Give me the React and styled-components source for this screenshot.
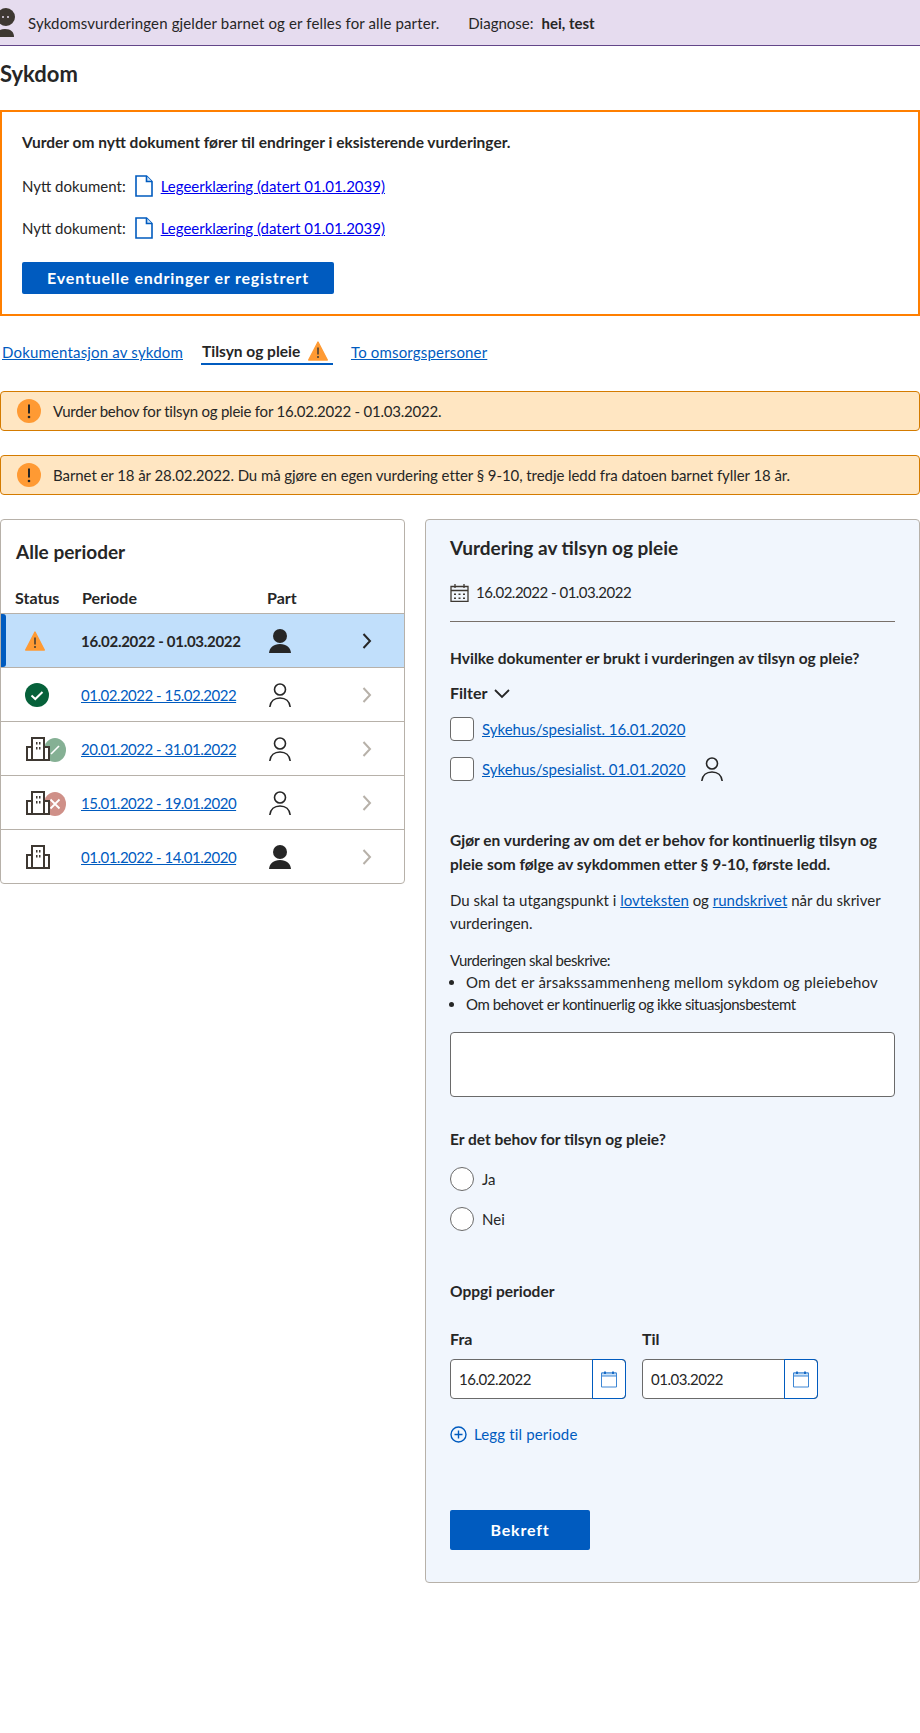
import React from "react";
import styled, { createGlobalStyle } from "styled-components";

const GlobalStyle = createGlobalStyle`
  * { box-sizing: border-box; }
  html, body { margin: 0; padding: 0; background: #fff; }
  body {
    font-family: "Lato", "Noto Sans", sans-serif;
    font-size: 15px;
    line-height: 22px;
    color: #262626;
    overflow-x: hidden;
  }
`;

const Page = styled.div`
  width: 920px;
  min-height: 1733px;
  overflow: hidden;
`;

const Tracked = styled.span`
  letter-spacing: ${(p) => p.$track}px;
`;

const TopBar = styled.div`
  height: 46px;
  background: #e6dcef;
  border-bottom: 1px solid #634689;
  display: flex;
  align-items: center;
  padding-left: 28px;
  position: relative;
`;

const TopIcon = styled.svg`
  position: absolute;
  left: 0;
  top: 8px;
`;

const Diagnose = styled.span`
  margin-left: 29px;
`;

const DiagnoseValue = styled.b`
  margin-left: 8px;
  font-weight: 700;
`;

const Title = styled.h1`
  margin: 15px 0 23px;
  font-size: 22px;
  line-height: 26px;
  font-weight: 700;
`;

const NoticeBox = styled.section`
  border: 2px solid #ff7f00;
  height: 206px;
  padding: 19px 20px 0;
`;

const NoticeTitle = styled.p`
  margin: 0 0 22px;
  font-size: 15.5px;
  font-weight: 700;
`;

const DocRow = styled.div`
  display: flex;
  align-items: center;
  height: 22px;
  margin-bottom: 20px;
`;

const DocLink = styled.a`
  color: #0000ee;
  text-decoration: underline;
  margin-left: 8px;
`;

const DocIcon = styled.svg`
  margin-left: 9px;
`;

const PrimaryButton = styled.button`
  display: block;
  border: 0;
  border-radius: 2px;
  background: #005bbf;
  color: #fff;
  font: 700 16px/22px "Lato", "Noto Sans", sans-serif;
  letter-spacing: 0.8px;
  width: ${(p) => p.$width}px;
  height: ${(p) => p.$height}px;
  margin-top: ${(p) => p.$top || 0}px;
  padding: 0;
`;

const Tabs = styled.nav`
  display: flex;
  align-items: flex-start;
  margin: 25px 0 26px 2px;
  height: 24px;
`;

const TabLink = styled.a`
  color: #005bbf;
  text-decoration: underline;
  line-height: 22px;
  letter-spacing: 0.17px;
  margin-right: ${(p) => p.$gap || 0}px;
`;

const ActiveTab = styled.div`
  display: flex;
  align-items: center;
  justify-content: space-between;
  width: 132px;
  font-size: 15.5px;
  font-weight: 700;
  height: 24px;
  border-bottom: 2px solid #005bbf;
  padding: 0 5px 2px 1px;
  margin-right: 18px;
`;

const Alert = styled.div`
  height: 40px;
  display: flex;
  align-items: center;
  gap: 12px;
  padding-left: 16px;
  margin-bottom: 24px;
  background: #ffe6c2;
  border: 1px solid #d47b00;
  border-radius: 4px;
`;

const Columns = styled.div`
  display: flex;
  align-items: flex-start;
  gap: 20px;
`;

const Card = styled.section`
  border: 1px solid #b7b1a9;
  border-radius: 4px;
`;

const PeriodCard = styled(Card)`
  width: 405px;
  flex: none;
  background: #fff;
`;

const PeriodHeading = styled.h2`
  margin: 19px 15px 21px;
  font-size: 19px;
  line-height: 26px;
  font-weight: 700;
`;

const PeriodGrid = styled.div`
  display: grid;
  grid-template-columns: 80px 186px 88px 1fr;
  align-items: center;
`;

const HeadRow = styled(PeriodGrid)`
  height: 27px;
  font-size: 16px;
  font-weight: 700;
  padding-bottom: 4px;
  & > span:first-child { padding-left: 14px; }
  & > span:nth-child(2) { padding-left: 1px; }
`;

const PeriodRow = styled(PeriodGrid)`
  height: 54px;
  border-top: 1px solid #b7b1a9;
  background: ${(p) => (p.$active ? "#c1dffb" : "transparent")};
  position: relative;
  ${(p) =>
    p.$active &&
    `&::before {
      content: "";
      position: absolute;
      left: 0;
      top: 0;
      bottom: 0;
      width: 5px;
      border-radius: 0 3px 3px 0;
      background: #005bbf;
    }`}
`;

const StatusCell = styled.div`
  padding-left: ${(p) => p.$left}px;
  display: flex;
  align-items: center;
  position: relative;
`;

const StatusBadge = styled.span`
  position: absolute;
  left: 43px;
  top: 1px;
  width: 22px;
  height: 24px;
  border-radius: 50%;
  background: ${(p) => p.$bg};
  display: flex;
  align-items: center;
  justify-content: center;
`;

const BuildingWrap = styled.svg`
  position: relative;
  z-index: 1;
  display: block;
`;

const PeriodLink = styled.a`
  color: #005bbf;
  text-decoration: underline;
  letter-spacing: -0.5px;
`;

const PeriodStrong = styled.span`
  font-weight: 700;
  letter-spacing: -0.29px;
`;

const PartCell = styled.div`
  padding-left: 2px;
  display: flex;
`;

const ChevronCell = styled.div`
  display: flex;
`;

const AssessCard = styled(Card)`
  width: 495px;
  flex: none;
  height: 1064px;
  background: #f1f6fd;
  padding: 14px 24px 0;
`;

const AssessHeading = styled.h2`
  margin: 0 0 19px;
  font-size: 19px;
  line-height: 28px;
  font-weight: 700;
`;

const DateRow = styled.div`
  display: flex;
  align-items: center;
  gap: 7px;
  height: 22px;
  letter-spacing: -0.5px;
`;

const Divider = styled.hr`
  border: 0;
  border-top: 1px solid #78706a;
  margin: 18px 0 25px;
`;

const Question = styled.p`
  margin: 0 0 13px;
  font-size: 15.5px;
  font-weight: 700;
`;

const FilterRow = styled.div`
  display: flex;
  align-items: center;
  gap: 6px;
  font-size: 16px;
  font-weight: 700;
  height: 22px;
  margin-bottom: 13px;
`;

const CheckRow = styled.label`
  display: flex;
  align-items: center;
  height: 24px;
  margin-bottom: 16px;
`;

const CheckBox = styled.span`
  width: 24px;
  height: 24px;
  background: #fff;
  border: 1px solid #6a6a6a;
  border-radius: 4px;
  margin-right: 8px;
  flex: none;
`;

const CheckPerson = styled.span`
  display: flex;
  margin-left: 16px;
`;

const Lead = styled.p`
  margin: 47px 0 13px;
  font-size: 15.5px;
  font-weight: 700;
  line-height: 24px;
`;

const Body = styled.p`
  margin: 0 0 14px;
  line-height: 23px;
`;

const InlineLink = styled.a`
  color: #005bbf;
  text-decoration: underline;
`;

const BulletIntro = styled.div`
  line-height: 22px;
  letter-spacing: -0.46px;
`;

const BulletList = styled.ul`
  margin: 0 0 17px;
  padding-left: 16px;
  line-height: 22px;
`;

const TextArea = styled.div`
  height: 65px;
  background: #fff;
  border: 1px solid #6a6a6a;
  border-radius: 4px;
  margin-bottom: 31px;
`;

const RadioRow = styled.label`
  display: flex;
  align-items: center;
  gap: 8px;
  height: 24px;
  margin-bottom: 16px;
`;

const RadioDot = styled.span`
  width: 24px;
  height: 24px;
  border-radius: 50%;
  background: #fff;
  border: 1px solid #6a6a6a;
`;

const FieldHeading = styled.p`
  margin: ${(p) => p.$top}px 0 ${(p) => p.$bottom}px;
  font-size: 15.5px;
  font-weight: 700;
`;

const DateFields = styled.div`
  display: flex;
  gap: 16px;
`;

const DateField = styled.div`
  width: 176px;
`;

const FieldLabel = styled.div`
  font-size: 16px;
  font-weight: 700;
  margin-bottom: 9px;
`;

const DateInput = styled.div`
  height: 40px;
  display: flex;
  background: #fff;
  border: 1px solid #6a6a6a;
  border-radius: 4px;
`;

const DateValue = styled.span`
  flex: 1;
  display: flex;
  align-items: center;
  padding-left: 8px;
  letter-spacing: -0.48px;
`;

const DateButton = styled.span`
  width: 34px;
  margin: -1px;
  border: 1px solid #005bbf;
  border-radius: 0 4px 4px 0;
  display: flex;
  align-items: center;
  justify-content: center;
`;

const AddRow = styled.div`
  display: flex;
  align-items: center;
  gap: 7px;
  color: #005bbf;
  letter-spacing: 0.15px;
  margin: 24px 0 65px;
  height: 22px;
`;

const PersonOutline = () => (
  <svg width="22" height="24" viewBox="0 0 22 24" fill="none" stroke="#262626" strokeWidth="1.6">
    <circle cx="11" cy="6.5" r="5.5" />
    <path d="M0.8 24c.6-5.6 4.6-9 10.2-9s9.6 3.4 10.2 9" />
  </svg>
);

const PersonSolid = () => (
  <svg width="22" height="24" viewBox="0 0 22 24" fill="#262626">
    <circle cx="11" cy="7" r="7" />
    <path d="M0 24c.5-5.5 4.5-9 11-9s10.5 3.5 11 9z" />
  </svg>
);

const Chevron = ({ color = "#262626" }) => (
  <svg width="24" height="24" viewBox="0 0 24 24" fill="none" stroke={color} strokeWidth="2">
    <path d="M8.5 5 15 12l-6.5 7" />
  </svg>
);

const Triangle = ({ size = 20 }) => (
  <svg width={size} height={size} viewBox="0 0 20 20">
    <path d="M10 1 19.3 19H.7z" fill="#ff9a33" stroke="#ff9a33" strokeWidth="1.4" strokeLinejoin="round" />
    <path d="M10 6.5v7" stroke="#3e3832" strokeWidth="1.5" />
    <circle cx="10" cy="16" r="1" fill="#3e3832" />
  </svg>
);

const AlertDot = () => (
  <svg width="24" height="24" viewBox="0 0 24 24">
    <circle cx="12" cy="12" r="12" fill="#ff9a33" />
    <path d="M12 5.5v9" stroke="#262626" strokeWidth="2" />
    <circle cx="12" cy="18" r="1.3" fill="#262626" />
  </svg>
);

const Building = () => (
  <BuildingWrap width="24" height="24" viewBox="0 0 24 24" fill="#fff" stroke="#3e3832" strokeWidth="2">
    <path d="M1 23V10h5v13zM18 23V10h5v13z" />
    <path d="M6 23V1h12v22z" />
    <path d="M10 5h1.5v2.5H10zM13 5h1.5v2.5H13zM10 10h1.5v2.5H10zM13 10h1.5v2.5H13z" fill="#3e3832" stroke="none" />
    <path d="M1 23h22" />
  </BuildingWrap>
);

const CalendarLine = () => (
  <svg width="18" height="18" viewBox="0 0 18 18" fill="#cde3f8" stroke="#005bbf" strokeWidth="1">
    <path d="M1.5 3h15v14h-15z" fill="none" stroke="#3d86d4" />
    <path d="M1.5 3h15v3h-15z" stroke="#3d86d4" />
    <path d="M5 1.5V4M13 1.5V4" strokeWidth="1.6" />
  </svg>
);

const DocGlyph = () => (
  <DocIcon width="18" height="22" viewBox="0 0 18 22" fill="none" stroke="#005bbf" strokeWidth="1.6">
    <path d="M1 1h10.5L17 6.5V21H1z" />
    <path d="M11.5 1v5.5H17" fill="#cde3f8" />
  </DocIcon>
);

const rows = [
  { period: "01.02.2022 - 15.02.2022", status: "ok", part: "outline" },
  { period: "20.01.2022 - 31.01.2022", status: "buildingOk", part: "outline" },
  { period: "15.01.2022 - 19.01.2020", status: "buildingNo", part: "outline" },
  { period: "01.01.2022 - 14.01.2020", status: "building", part: "solid" },
];

const StatusIcon = ({ status }) => {
  if (status === "ok") {
    return (
      <svg width="24" height="24" viewBox="0 0 24 24">
        <circle cx="12" cy="12" r="12" fill="#06613a" />
        <path d="M6.5 12.5 10.3 16 17.5 9" stroke="#fff" strokeWidth="2" fill="none" />
      </svg>
    );
  }
  return (
    <>
      <Building />
      {status === "buildingOk" && (
        <StatusBadge $bg="#85b094">
          <svg width="14" height="14" viewBox="0 0 14 14" fill="none" stroke="#fff" strokeWidth="1.6">
            <path d="M3 11 11 3" />
          </svg>
        </StatusBadge>
      )}
      {status === "buildingNo" && (
        <StatusBadge $bg="#cf9088">
          <svg width="14" height="14" viewBox="0 0 14 14" fill="none" stroke="#fff" strokeWidth="1.8">
            <path d="M2.5 2.5l9 9M11.5 2.5l-9 9" />
          </svg>
        </StatusBadge>
      )}
    </>
  );
};

const App = () => (
  <Page>
    <GlobalStyle />
    <TopBar>
      <TopIcon width="16" height="30" viewBox="0 0 16 30">
        <circle cx="6" cy="9" r="9" fill="#3e3832" />
        <circle cx="3" cy="9" r="1" fill="#e6dcef" />
        <circle cx="8" cy="9" r="1" fill="#e6dcef" />
        <path d="M-4 29c0-5 3-8 9-8s9 3 9 8z" fill="#3e3832" />
      </TopIcon>
      <Tracked $track={0.13}>Sykdomsvurderingen gjelder barnet og er felles for alle parter.</Tracked>
      <Diagnose>Diagnose:</Diagnose>
      <DiagnoseValue>hei, test</DiagnoseValue>
    </TopBar>

    <Title>Sykdom</Title>

    <NoticeBox>
      <NoticeTitle>Vurder om nytt dokument fører til endringer i eksisterende vurderinger.</NoticeTitle>
      <DocRow>
        Nytt dokument:
        <DocGlyph />
        <DocLink>Legeerklæring (datert 01.01.2039)</DocLink>
      </DocRow>
      <DocRow>
        Nytt dokument:
        <DocGlyph />
        <DocLink>Legeerklæring (datert 01.01.2039)</DocLink>
      </DocRow>
      <PrimaryButton $width={312} $height={32} $top={23}>Eventuelle endringer er registrert</PrimaryButton>
    </NoticeBox>

    <Tabs>
      <TabLink $gap={18}>Dokumentasjon av sykdom</TabLink>
      <ActiveTab>
        Tilsyn og pleie
        <Triangle />
      </ActiveTab>
      <TabLink>To omsorgspersoner</TabLink>
    </Tabs>

    <Alert>
      <AlertDot />
      <Tracked $track={-0.22}>Vurder behov for tilsyn og pleie for 16.02.2022 - 01.03.2022.</Tracked>
    </Alert>
    <Alert>
      <AlertDot />
      <Tracked $track={-0.07}>Barnet er 18 år 28.02.2022. Du må gjøre en egen vurdering etter § 9-10, tredje ledd fra datoen barnet fyller 18 år.</Tracked>
    </Alert>

    <Columns>
      <PeriodCard>
        <PeriodHeading>Alle perioder</PeriodHeading>
        <HeadRow>
          <span>Status</span>
          <span>Periode</span>
          <span>Part</span>
        </HeadRow>
        <PeriodRow $active>
          <StatusCell $left={24}><Triangle /></StatusCell>
          <PeriodStrong>16.02.2022 - 01.03.2022</PeriodStrong>
          <PartCell><PersonSolid /></PartCell>
          <ChevronCell><Chevron /></ChevronCell>
        </PeriodRow>
        {rows.map((row) => (
          <PeriodRow key={row.period}>
            <StatusCell $left={row.status === "ok" ? 24 : 25}><StatusIcon status={row.status} /></StatusCell>
            <PeriodLink>{row.period}</PeriodLink>
            <PartCell>{row.part === "solid" ? <PersonSolid /> : <PersonOutline />}</PartCell>
            <ChevronCell><Chevron color="#b7b1a9" /></ChevronCell>
          </PeriodRow>
        ))}
      </PeriodCard>

      <AssessCard>
        <AssessHeading>Vurdering av tilsyn og pleie</AssessHeading>
        <DateRow>
          <svg width="19" height="19" viewBox="0 0 19 19" fill="none" stroke="#3e3832" strokeWidth="1.3">
            <path d="M1 3.5h17v15H1zM1 7.5h17M5 1v4M14 1v4" />
            <path d="M4 10.5h2v1.6H4zM8.5 10.5h2v1.6h-2zM13 10.5h2v1.6h-2zM4 14.5h2v1.6H4zM8.5 14.5h2v1.6h-2zM13 14.5h2v1.6h-2z" fill="#3e3832" stroke="none" />
          </svg>
          16.02.2022 - 01.03.2022
        </DateRow>
        <Divider />
        <Question>Hvilke dokumenter er brukt i vurderingen av tilsyn og pleie?</Question>
        <FilterRow>
          Filter
          <svg width="18" height="18" viewBox="0 0 18 18" fill="none" stroke="#262626" strokeWidth="1.8">
            <path d="M2 6l7 7 7-7" />
          </svg>
        </FilterRow>
        <CheckRow>
          <CheckBox />
          <InlineLink>Sykehus/spesialist. 16.01.2020</InlineLink>
        </CheckRow>
        <CheckRow>
          <CheckBox />
          <InlineLink>Sykehus/spesialist. 01.01.2020</InlineLink>
          <CheckPerson><PersonOutline /></CheckPerson>
        </CheckRow>

        <Lead>
          Gjør en vurdering av om det er behov for kontinuerlig tilsyn og pleie som følge av sykdommen etter § 9-10, første ledd.
        </Lead>
        <Body>
          Du skal ta utgangspunkt i <InlineLink>lovteksten</InlineLink> og <InlineLink>rundskrivet</InlineLink> når du skriver vurderingen.
        </Body>
        <BulletIntro>Vurderingen skal beskrive:</BulletIntro>
        <BulletList>
          <li><Tracked $track={0.2}>Om det er årsakssammenheng mellom sykdom og pleiebehov</Tracked></li>
          <li><Tracked $track={-0.45}>Om behovet er kontinuerlig og ikke situasjonsbestemt</Tracked></li>
        </BulletList>
        <TextArea />

        <FieldHeading $top={0} $bottom={17}>Er det behov for tilsyn og pleie?</FieldHeading>
        <RadioRow><RadioDot />Ja</RadioRow>
        <RadioRow><RadioDot />Nei</RadioRow>

        <FieldHeading $top={49} $bottom={26}>Oppgi perioder</FieldHeading>
        <DateFields>
          <DateField>
            <FieldLabel>Fra</FieldLabel>
            <DateInput>
              <DateValue>16.02.2022</DateValue>
              <DateButton><CalendarLine /></DateButton>
            </DateInput>
          </DateField>
          <DateField>
            <FieldLabel>Til</FieldLabel>
            <DateInput>
              <DateValue>01.03.2022</DateValue>
              <DateButton><CalendarLine /></DateButton>
            </DateInput>
          </DateField>
        </DateFields>
        <AddRow>
          <svg width="17" height="17" viewBox="0 0 17 17" fill="none" stroke="#005bbf" strokeWidth="1.4">
            <circle cx="8.5" cy="8.5" r="7.5" />
            <path d="M8.5 4.5v8M4.5 8.5h8" />
          </svg>
          Legg til periode
        </AddRow>
        <PrimaryButton $width={140} $height={40}>Bekreft</PrimaryButton>
      </AssessCard>
    </Columns>
  </Page>
);

export default App;
